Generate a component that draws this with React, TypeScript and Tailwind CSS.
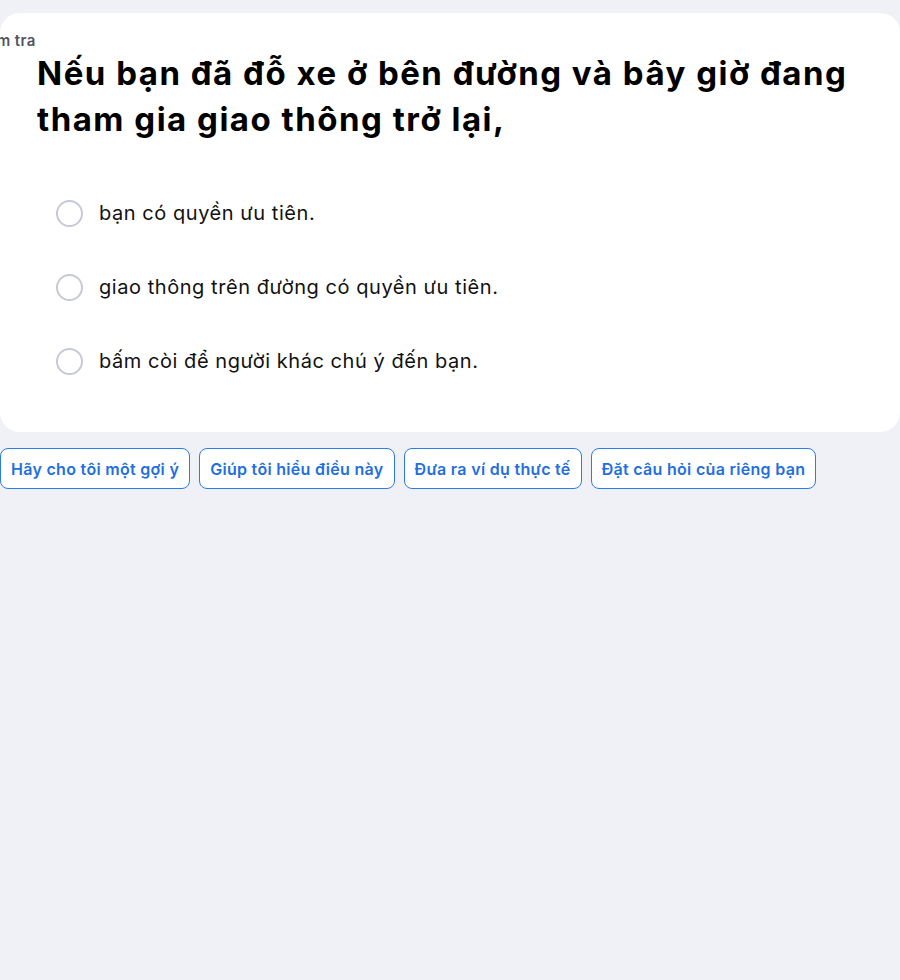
const options = [
  "bạn có quyền ưu tiên.",
  "giao thông trên đường có quyền ưu tiên.",
  "bấm còi để người khác chú ý đến bạn.",
];

const prompts = [
  "Hãy cho tôi một gợi ý",
  "Giúp tôi hiểu điều này",
  "Đưa ra ví dụ thực tế",
  "Đặt câu hỏi của riêng bạn",
];

export default function App() {
  return (
    <div className="min-h-[980px] bg-[#f0f1f6] pt-[13px] overflow-hidden font-['Inter','Noto_Sans',sans-serif]">
      <div className="w-[900px] rounded-[20px] bg-white pb-[58px]">
        <div className="pt-[19px] text-[15px] font-semibold leading-[18px] tracking-[0.4px] text-[#55555f] -ml-[28px]">
          Kiểm tra
        </div>
        <h1 className="ml-[37px] w-[850px] text-[33px] font-bold leading-[46px] tracking-[1.5px] text-black">
          Nếu bạn đã đỗ xe ở bên đường và bây giờ đang tham gia giao thông trở lại,
        </h1>
        <ul className="mt-[58px] ml-[56px] flex flex-col gap-[48px]">
          {options.map((opt) => (
            <li key={opt} className="flex items-center gap-[16px] h-[26px]">
              <span className="h-[27px] w-[27px] shrink-0 rounded-full border-2 border-[#c7c8d8] bg-white"></span>
              <span className="text-[20px] leading-[26px] tracking-[0.55px] text-[#111]">{opt}</span>
            </li>
          ))}
        </ul>
      </div>
      <div className="mt-[16px] flex gap-[9px]">
        {prompts.map((p) => (
          <button
            key={p}
            className="h-[41px] rounded-[8px] border border-[#2a7ce8] bg-white px-[10px] text-[16px] font-semibold tracking-[0.3px] text-[#1f6fe0]"
          >
            {p}
          </button>
        ))}
      </div>
    </div>
  );
}
